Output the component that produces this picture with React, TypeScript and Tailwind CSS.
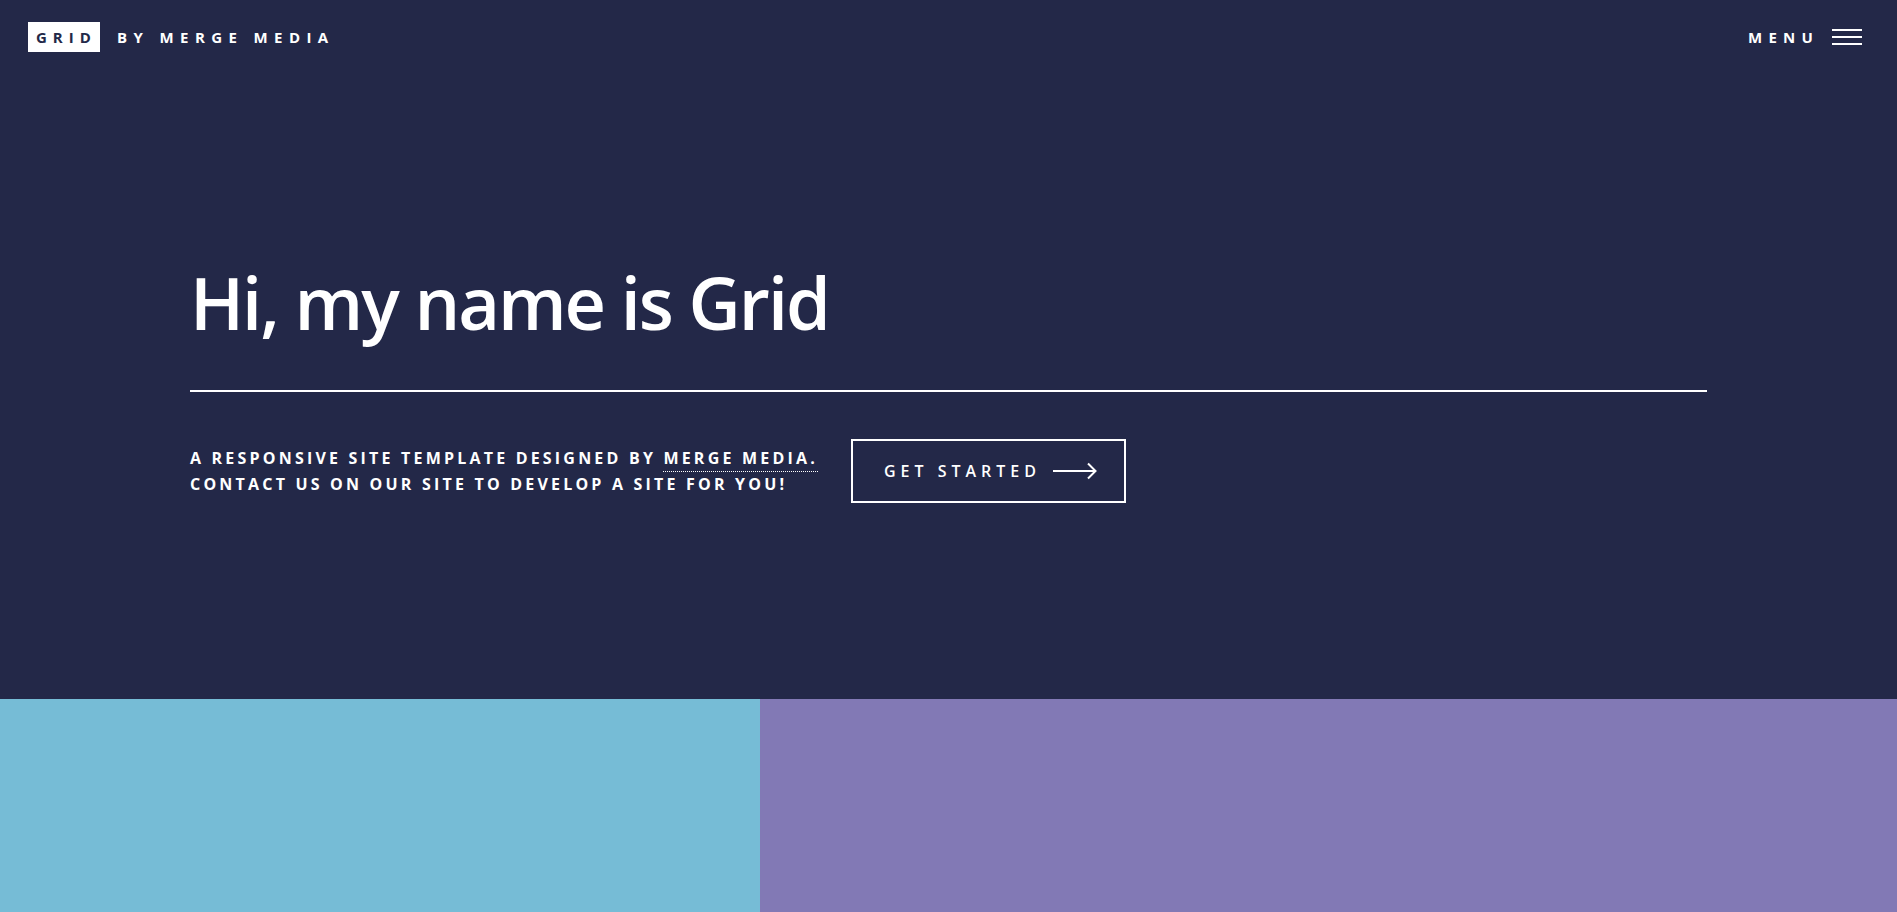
import React from "react";

export default function App() {
  return (
    <div className="w-full h-[912px] overflow-hidden bg-[#232848] text-white" style={{ fontFamily: '"Open Sans", "Noto Sans", sans-serif' }}>
      <div className="h-[699px] flex flex-col">
        <header className="flex items-center justify-between pt-[22px] pl-[28px] pr-[35px]">
          <div className="flex items-center">
            <div className="h-[30px] w-[72px] bg-white text-[#232848] flex items-center pl-[8px] text-[15px] font-bold tracking-[6px] leading-none">
              GRID
            </div>
            <div className="ml-[17px] text-[15px] font-bold tracking-[6.4px] leading-none">BY MERGE MEDIA</div>
          </div>
          <div className="flex items-center">
            <span className="text-[15px] font-bold tracking-[6.2px] leading-none">MENU</span>
            <div className="ml-[13px] flex flex-col gap-[5px] w-[30px]">
              <span className="block h-[2px] w-full bg-white" />
              <span className="block h-[2px] w-full bg-white" />
              <span className="block h-[2px] w-full bg-white" />
            </div>
          </div>
        </header>

        <main className="px-[190px]">
          <h1 className="mt-[214px] text-[72px] leading-[72px] font-semibold tracking-[-2px]">Hi, my name is Grid</h1>
          <div className="mt-[52px] h-[2px] w-full bg-white" />
          <div className="mt-[47px] flex items-center">
            <p className="text-[16px] leading-[26px] font-bold tracking-[3.2px] uppercase">
              A responsive site template designed by{" "}
              <span className="border-b border-dotted border-white pb-[2px]">Merge Media.</span>
              <br />
              Contact us on our site to develop a site for you!
            </p>
            <button className="ml-[33px] h-[64px] border-2 border-white flex items-center pl-[31px] pr-[27px] text-[16px] font-semibold tracking-[5px] leading-none">
              GET STARTED
              <svg className="ml-[12px]" width="44" height="18" viewBox="0 0 44 18" fill="none" stroke="white" strokeWidth="2">
                <path d="M0 9 H42" />
                <path d="M35 1.5 L42.5 9 L35 16.5" />
              </svg>
            </button>
          </div>
        </main>
      </div>
      <div className="flex h-[213px]">
        <div className="w-[760px] bg-[#76bcd6]" />
        <div className="flex-1 bg-[#8279b5]" />
      </div>
    </div>
  );
}
